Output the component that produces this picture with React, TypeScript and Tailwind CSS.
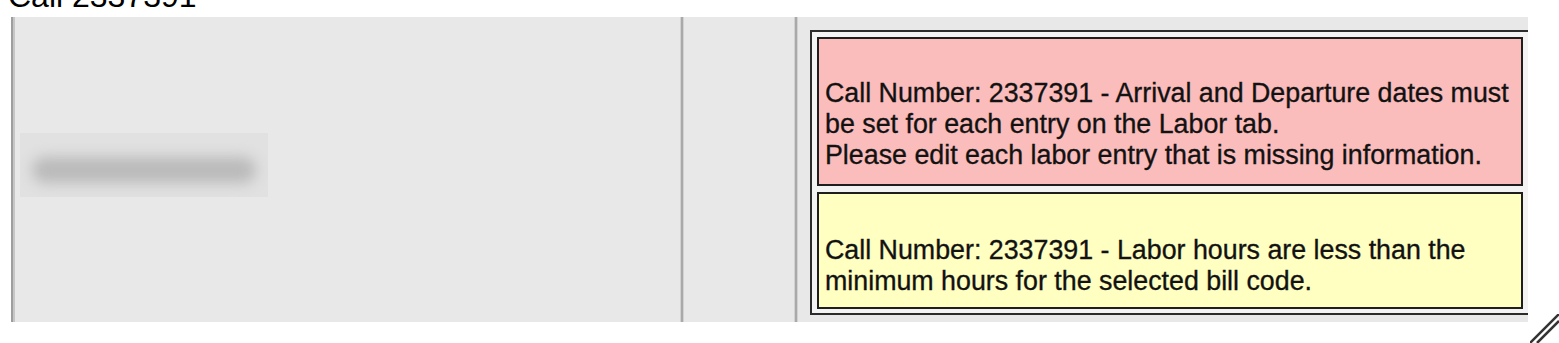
import React from "react";

export default function App() {
  return (
    <div
      className="relative w-[1559px] h-[343px] bg-white overflow-hidden text-[#111]"
      style={{ fontFamily: '"Liberation Sans", Arial, sans-serif' }}
    >
      {/* cut-off heading */}
      <div className="h-[17px] overflow-hidden flex items-end pl-[8px]">
        <span className="text-[32px] leading-[32px] mb-[5px] whitespace-nowrap text-black">
          Call 2337391
        </span>
      </div>

      {/* gray panel */}
      <div className="ml-[11px] w-[1517px] h-[305px] flex bg-[#e8e8e8] overflow-hidden">
        <div className="w-[2px] shrink-0 bg-[#9e9e9e]" />
        <div className="w-[2px] shrink-0 bg-[#c6c6c6]" />

        {/* column 1 */}
        <div className="w-[665px] shrink-0 pl-[5px] pt-[116px]">
          <div className="w-[248px] h-[64px] bg-[#e1e1e1] overflow-hidden pt-[24px] px-[12px]">
            <div className="h-[26px] bg-[#bababa] blur-[7px] rounded-full" />
          </div>
        </div>

        {/* divider */}
        <div className="w-[4px] shrink-0 flex">
          <div className="w-[1px] bg-[#d2d2d2]" />
          <div className="w-[2px] bg-[#a9a9a9]" />
          <div className="w-[1px] bg-[#d2d2d2]" />
        </div>

        {/* column 2 */}
        <div className="w-[110px] shrink-0" />

        {/* divider */}
        <div className="w-[4px] shrink-0 flex">
          <div className="w-[1px] bg-[#d2d2d2]" />
          <div className="w-[2px] bg-[#a9a9a9]" />
          <div className="w-[1px] bg-[#d2d2d2]" />
        </div>

        {/* column 3 */}
        <div className="flex-1 min-w-0 pl-[12px] pt-[13px]">
          <div className="w-[720px] shrink-0 border-2 border-[#2b2b2b] bg-[#f3f3f3] pt-[5px] pb-[4px] px-[5px] flex flex-col gap-[6px] text-[26.8px] leading-[31px] whitespace-nowrap [-webkit-text-stroke:0.35px_#1a1a1a]">
            <div className="h-[149px] border-2 border-[#1e1e1e] bg-[#fbbcbc] pt-[39px] pl-[6px]">
              <div>Call Number: 2337391 - Arrival and Departure dates must</div>
              <div>be set for each entry on the Labor tab.</div>
              <div>Please edit each labor entry that is missing information.</div>
            </div>
            <div className="h-[117px] border-2 border-[#1e1e1e] bg-[#ffffc2] pt-[41px] pl-[6px]">
              <div>Call Number: 2337391 - Labor hours are less than the</div>
              <div>minimum hours for the selected bill code.</div>
            </div>
          </div>
        </div>
      </div>

      {/* resize grip */}
      <svg
        className="absolute left-[1530px] top-[314px]"
        width="29"
        height="29"
        viewBox="0 0 29 29"
      >
        <line x1="0" y1="29" x2="29" y2="0" stroke="#333" strokeWidth="2.5" />
        <line x1="7" y1="29" x2="29" y2="7" stroke="#333" strokeWidth="2.5" />
      </svg>
    </div>
  );
}
